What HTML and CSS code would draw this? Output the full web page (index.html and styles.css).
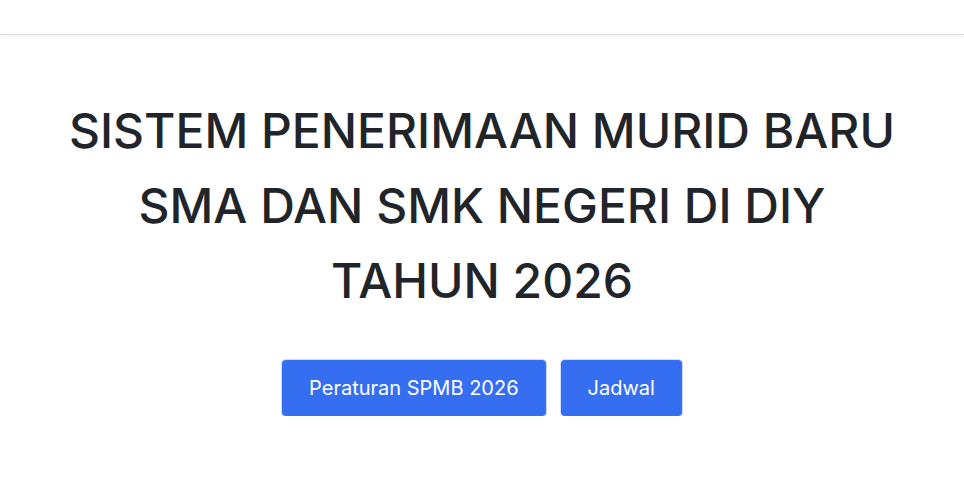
FILE: index.html
```html
<!DOCTYPE html>
<html lang="id">
<head>
<meta charset="utf-8">
<title>SPMB DIY 2026</title>
<link rel="stylesheet" href="styles.css">
</head>
<body>
<header class="topbar"></header>
<main class="hero">
  <h1 class="hero-title">SISTEM PENERIMAAN MURID BARU<br>SMA DAN SMK NEGERI DI DIY<br>TAHUN 2026</h1>
  <div class="hero-actions">
    <a class="btn" href="#">Peraturan SPMB 2026</a>
    <a class="btn" href="#">Jadwal</a>
  </div>
</main>
</body>
</html>
```

FILE: styles.css
```css
* { box-sizing: border-box; }
html, body { margin: 0; padding: 0; background: #fff; }
body {
  font-family: "Inter", "Open Sans", sans-serif;
  color: #212529;
}
.topbar {
  height: 35px;
  background: #fff;
  border-bottom: 1px solid #e0e0e0;
  box-shadow: 0 2px 4px rgba(0,0,0,0.05);
}
.hero {
  display: flex;
  flex-direction: column;
  align-items: center;
  padding-top: 58px;
}
.hero-title {
  margin: 0;
  font-size: 48px;
  font-weight: 500;
  line-height: 75px;
  text-align: center;
  color: #212529;
  letter-spacing: 0;
}
.hero-actions {
  display: flex;
  gap: 15px;
  margin-top: 42px;
}
.btn {
  display: inline-flex;
  align-items: center;
  height: 56px;
  padding: 0 27px;
  background: #356ef1;
  color: #fff;
  text-decoration: none;
  font-size: 20px;
  font-weight: 400;
  border-radius: 4px;
  box-shadow: 0 0 0 1px rgba(53,110,241,0.25);
}
```
